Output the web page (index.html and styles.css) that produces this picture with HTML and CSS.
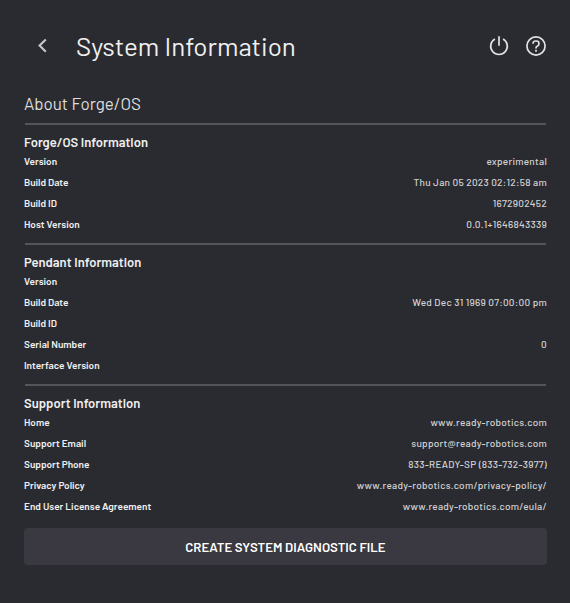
FILE: index.html
```html
<!DOCTYPE html>
<html lang="en">
<head>
<meta charset="utf-8">
<title>System Information</title>
<link rel="stylesheet" href="styles.css">
</head>
<body>
<header class="topbar">
  <svg class="back" width="12" height="18" viewBox="0 0 12 18"><path d="M9.8 2.4 3.6 8.6l6.2 6.2"/></svg>
  <h1>System Information</h1>
  <svg class="icon" width="22" height="22" viewBox="0 0 22 22"><path d="M11 1.2v9.6M6.9 4a8.3 8.3 0 1 0 8.2 0"/></svg>
  <svg class="icon" width="22" height="22" viewBox="0 0 22 22"><circle cx="11" cy="11" r="9.1"/><path d="M8.1 8.7V8.3a2.3 2.3 0 0 1 2.3-2.3h1.2a2.3 2.3 0 0 1 2.3 2.3v.6c0 1-.5 1.5-1.2 2l-.8.6c-.6.4-.9.8-.9 1.5v.4M11 14.8v1.9"/></svg>
</header>
<main>
  <h2>About Forge/OS</h2>
  <section>
    <h3>Forge/OS Information</h3>
    <dl>
      <div><dt>Version</dt><dd>experimental</dd></div>
      <div><dt>Build Date</dt><dd>Thu Jan 05 2023 02:12:58 am</dd></div>
      <div><dt>Build ID</dt><dd>1672902452</dd></div>
      <div><dt>Host Version</dt><dd>0.0.1+1646843339</dd></div>
    </dl>
  </section>
  <section>
    <h3>Pendant Information</h3>
    <dl>
      <div><dt>Version</dt><dd></dd></div>
      <div><dt>Build Date</dt><dd>Wed Dec 31 1969 07:00:00 pm</dd></div>
      <div><dt>Build ID</dt><dd></dd></div>
      <div><dt>Serial Number</dt><dd>0</dd></div>
      <div><dt>Interface Version</dt><dd></dd></div>
    </dl>
  </section>
  <section>
    <h3>Support Information</h3>
    <dl>
      <div><dt>Home</dt><dd>www.ready-robotics.com</dd></div>
      <div><dt>Support Email</dt><dd>support@ready-robotics.com</dd></div>
      <div><dt>Support Phone</dt><dd>833-READY-SP (833-732-3977)</dd></div>
      <div><dt>Privacy Policy</dt><dd>www.ready-robotics.com/privacy-policy/</dd></div>
      <div><dt>End User License Agreement</dt><dd>www.ready-robotics.com/eula/</dd></div>
    </dl>
  </section>
  <button type="button">CREATE SYSTEM DIAGNOSTIC FILE</button>
</main>
</body>
</html>
```
FILE: styles.css
```css
* { box-sizing: border-box; }
body {
  margin: 0;
  height: 603px;
  background: #2a2b30;
  color: #f0f0f0;
  font-family: Barlow, Roboto, sans-serif;
}
h1, h2, h3, dl, dd { margin: 0; }
.topbar { display: flex; align-items: center; height: 92px; padding: 0 23px 0 36px; }
.back { fill: none; stroke: #c8c8ca; stroke-width: 2.1; }
h1 { flex: 1; margin-left: 28px; padding-bottom: 1px; font-size: 26px; font-weight: 400; line-height: 32px; white-space: nowrap; }
.icon { fill: none; stroke: #e2e2e3; stroke-width: 1.7; }
.icon + .icon { margin-left: 15px; }
main { padding: 0 23px 0 24px; }
h2 { height: 31px; font-size: 17px; font-weight: 400; line-height: 23px; color: #dededf; }
section { padding: 8px 0; }
section::before { content: ""; display: block; height: 2px; margin: -8px 1px 8px; background: #54555a; }
h3 { height: 18px; font-size: 13px; font-weight: 600; line-height: 19px; letter-spacing: .02px; }
dl div { display: flex; justify-content: space-between; height: 21px; line-height: 21px; white-space: nowrap; }
dt { font-size: 10px; font-weight: 600; }
dd { font-size: 10px; font-weight: 500; color: #d2d2d4; letter-spacing: .26px; }
button {
  display: block;
  width: 100%;
  height: 37px;
  margin-top: 3px;
  padding: 0;
  border: 0;
  border-radius: 4px;
  background: #3a3840;
  color: #fff;
  font: 600 13.2px/38px Barlow, Roboto, sans-serif;
}
```
